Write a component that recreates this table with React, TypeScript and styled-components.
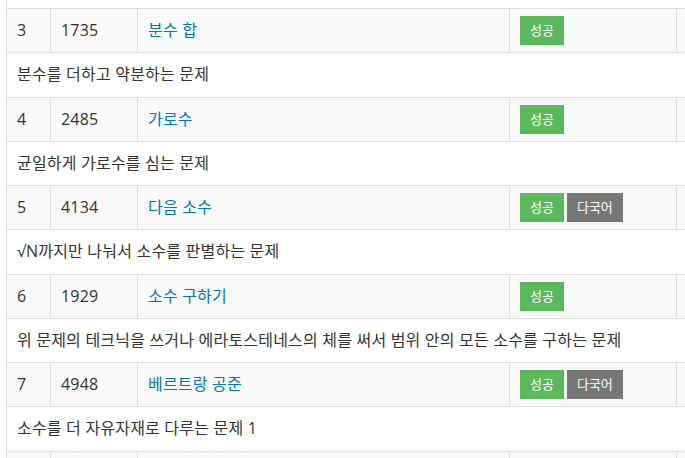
import React from "react";
import styled, { createGlobalStyle } from "styled-components";

const GlobalStyle = createGlobalStyle`
  html, body {
    margin: 0;
    padding: 0;
    overflow: hidden;
    background: #ffffff;
  }
  body {
    font-family: "Open Sans", "Noto Sans CJK KR", sans-serif;
    font-size: 16px;
    letter-spacing: 0.2px;
    color: #333333;
  }
`;

const Page = styled.div`
  padding-left: 6px;
  margin-top: -36.27px;
`;

const Table = styled.table`
  border-collapse: collapse;
  table-layout: fixed;
  width: 771px;
  border-left: 1px solid #dddddd;
`;

const Row = styled.tr<{ $striped?: boolean }>`
  background: ${(p) => (p.$striped ? "#f9f9f9" : "#ffffff")};
`;

const Cell = styled.td`
  border: 1px solid #dddddd;
  padding: 11px 10px;
  line-height: 21.27px;
  vertical-align: middle;
  white-space: nowrap;
  overflow: hidden;
`;

const BadgeCell = styled(Cell)`
  padding-top: 7.135px;
  padding-bottom: 7.135px;
  font-size: 0;
`;

const DescCell = styled(Cell)`
  border-right: none;
`;

const ProblemLink = styled.a`
  color: #0076c0;
  text-decoration: none;
`;

const Badges = styled.div`
  display: flex;
  gap: 3px;
`;

const Badge = styled.span<{ $kind: "success" | "lang" }>`
  display: inline-flex;
  align-items: center;
  justify-content: center;
  height: 29px;
  padding: 0 10px;
  font-size: 13px;
  letter-spacing: 0;
  line-height: 1;
  color: #ffffff;
  background: ${(p) => (p.$kind === "success" ? "#5cb85c" : "#777777")};
`;

type Problem = {
  no: number;
  id: number;
  title: string;
  desc: string;
  multi: boolean;
};

const problems: Problem[] = [
  { no: 3, id: 1735, title: "분수 합", desc: "분수를 더하고 약분하는 문제", multi: false },
  { no: 4, id: 2485, title: "가로수", desc: "균일하게 가로수를 심는 문제", multi: false },
  { no: 5, id: 4134, title: "다음 소수", desc: "√N까지만 나눠서 소수를 판별하는 문제", multi: true },
  { no: 6, id: 1929, title: "소수 구하기", desc: "위 문제의 테크닉을 쓰거나 에라토스테네스의 체를 써서 범위 안의 모든 소수를 구하는 문제", multi: false },
  { no: 7, id: 4948, title: "베르트랑 공준", desc: "소수를 더 자유자재로 다루는 문제 1", multi: true },
];

export default function App() {
  return (
    <>
      <GlobalStyle />
      <Page>
        <Table>
          <colgroup>
            <col style={{ width: 44 }} />
            <col style={{ width: 87 }} />
            <col style={{ width: 372 }} />
            <col style={{ width: 167 }} />
            <col style={{ width: 101 }} />
          </colgroup>
          <tbody>
            <Row>
              <DescCell colSpan={5}>더 큰 수의 최소공배수를 구하는 문제</DescCell>
            </Row>
            {problems.map((p) => (
              <React.Fragment key={p.id}>
                <Row $striped>
                  <Cell>{p.no}</Cell>
                  <Cell>{p.id}</Cell>
                  <Cell>
                    <ProblemLink href="#">{p.title}</ProblemLink>
                  </Cell>
                  <BadgeCell>
                    <Badges>
                      <Badge $kind="success">성공</Badge>
                      {p.multi && <Badge $kind="lang">다국어</Badge>}
                    </Badges>
                  </BadgeCell>
                  <Cell></Cell>
                </Row>
                <Row>
                  <DescCell colSpan={5}>{p.desc}</DescCell>
                </Row>
              </React.Fragment>
            ))}
            <Row $striped>
              <Cell>8</Cell>
              <Cell>17103</Cell>
              <Cell>
                <ProblemLink href="#">골드바흐 파티션</ProblemLink>
              </Cell>
              <BadgeCell>
                <Badges>
                  <Badge $kind="success">성공</Badge>
                </Badges>
              </BadgeCell>
              <Cell></Cell>
            </Row>
          </tbody>
        </Table>
      </Page>
    </>
  );
}
